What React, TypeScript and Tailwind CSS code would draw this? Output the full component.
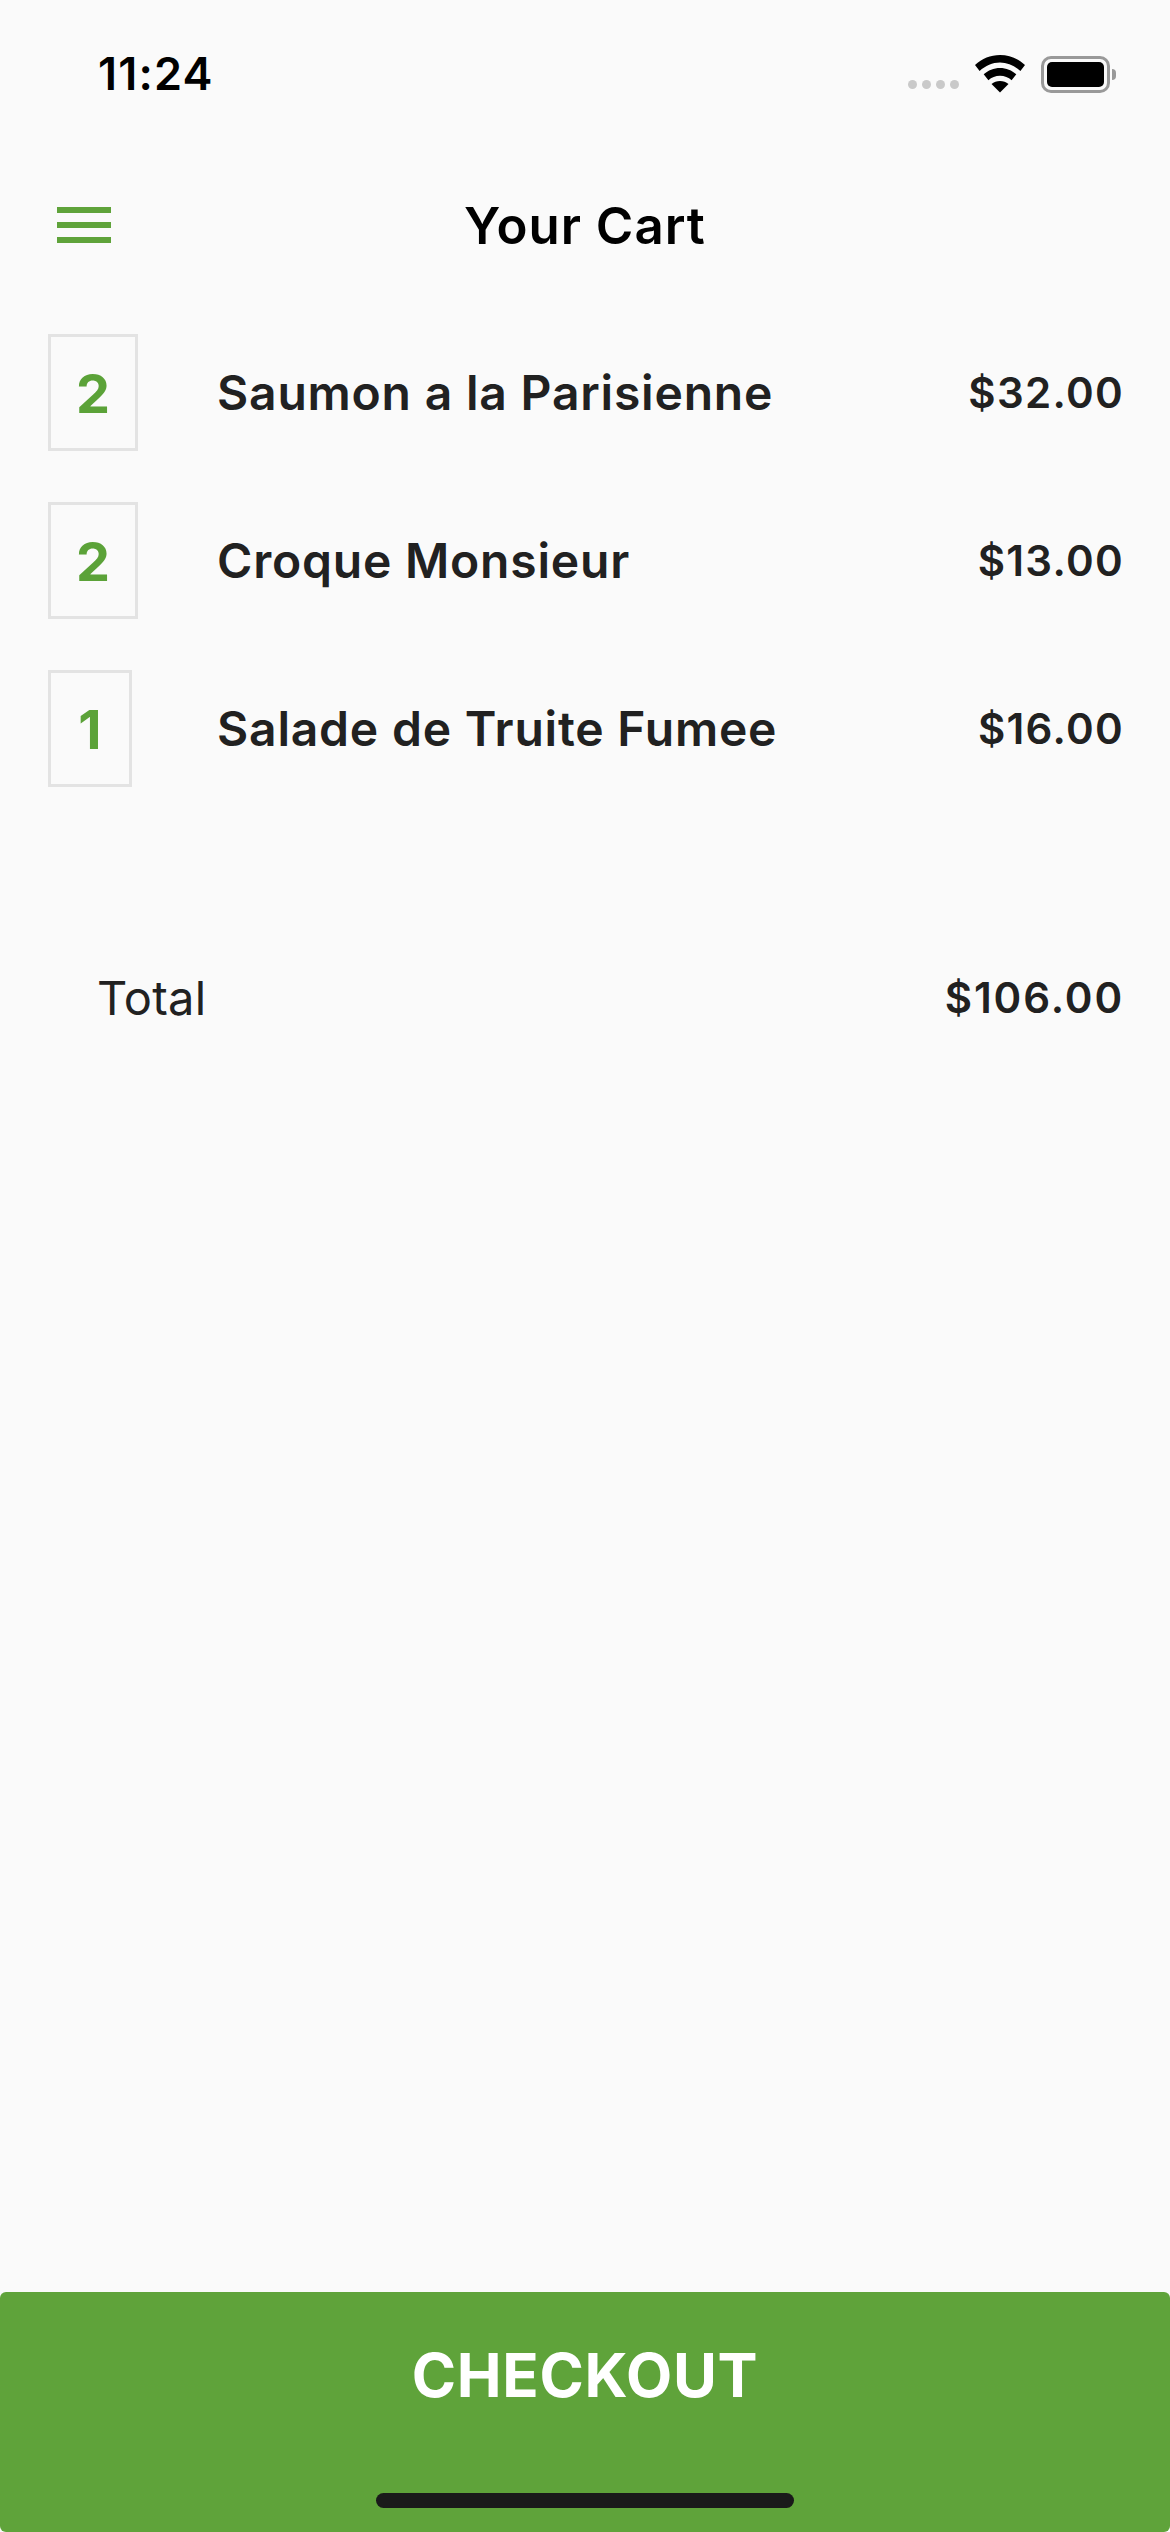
import React from 'react';

const items = [
  { qty: 2, name: 'Saumon a la Parisienne', price: '$32.00', box: 'w-[90px]' },
  { qty: 2, name: 'Croque Monsieur', price: '$13.00', box: 'w-[90px]' },
  { qty: 1, name: 'Salade de Truite Fumee', price: '$16.00', box: 'w-[84px]' },
];

const Wifi = () => (
  <svg width="50" height="38" viewBox="0 0 50 38" fill="#000">
    <path d="M25 0C15.5 0 7 3.6 0 10l4.6 6C10.5 10.600 17.500 7.500 25 7.500S39.500 10.600 45.400 16l4.600-6C43 3.600 34.500 0 25 0Z" />
    <path d="M25 13c-6.200 0-11.900 2.300-16.300 6.300l4.700 5.900C16.500 22.400 20.600 20.700 25 20.700s8.500 1.700 11.600 4.500l4.700-5.900C36.900 15.300 31.200 13 25 13Z" />
    <path d="M25 26c-3.200 0-6.200 1.100-8.500 3.100L25 37.500l8.500-8.400C31.200 27.100 28.200 26 25 26Z" />
  </svg>
);

export default function App() {
  return (
    <div className="flex h-[2532px] w-[1170px] flex-col overflow-hidden bg-[#fafafa] font-['Inter',sans-serif] text-[#212121]">
      <div className="flex h-[148px] shrink-0 items-start justify-between pl-[98px] pr-[54px] pt-[46px]">
        <span className="text-[45px] leading-[56px] font-semibold tracking-[1.2px] text-black">11:24</span>
        <div className="flex items-center pt-[9px]">
          <div className="mt-[20px] mr-[16px] flex gap-[5px]">
            <span className="h-[9px] w-[9px] rounded-full bg-[#c9c9c9]" />
            <span className="h-[9px] w-[9px] rounded-full bg-[#c9c9c9]" />
            <span className="h-[9px] w-[9px] rounded-full bg-[#c9c9c9]" />
            <span className="h-[9px] w-[9px] rounded-full bg-[#c9c9c9]" />
          </div>
          <Wifi />
          <div className="ml-[16px] flex items-center">
            <div className="h-[37px] w-[69px] rounded-[10px] border-[3px] border-[#999] p-[3px]">
              <div className="h-full w-full rounded-[5px] bg-black" />
            </div>
            <div className="ml-[2px] h-[11px] w-[4px] rounded-r-full bg-[#999]" />
          </div>
        </div>
      </div>

      <div className="relative flex h-[154px] shrink-0 items-center justify-center pt-[2px]">
        <div className="absolute left-[57px] top-[59px] flex w-[54px] flex-col gap-[9px]">
          <span className="h-[6px] bg-[#5fa33a]" />
          <span className="h-[6px] bg-[#5fa33a]" />
          <span className="h-[6px] bg-[#5fa33a]" />
        </div>
        <h1 className="text-[51px] leading-[60px] font-semibold tracking-[1px] text-black">Your Cart</h1>
      </div>

      <div className="flex shrink-0 flex-col gap-[51px] pl-[48px] pr-[46px] pt-[32px]">
        {items.map((item) => (
          <div key={item.name} className="flex h-[117px] items-center">
            <div className={`flex h-[117px] items-center justify-center border-[3px] border-[#e3e3e3] pt-[2px] text-[54px] font-bold text-[#5ba238] ${item.box}`}>
              {item.qty}
            </div>
            <span className={`text-[48px] font-semibold tracking-[0.8px] ${item.qty === 1 ? 'ml-[85px]' : 'ml-[79px]'}`}>{item.name}</span>
            <span className="ml-auto text-[42px] font-semibold tracking-[1.3px]">{item.price}</span>
          </div>
        ))}
      </div>

      <div className="flex shrink-0 items-center justify-between pl-[97px] pr-[46px] pt-[181px]">
        <span className="text-[47px] leading-[60px] font-normal tracking-[0.2px]">Total</span>
        <span className="text-[42px] leading-[60px] font-semibold tracking-[1.9px]">$106.00</span>
      </div>

      <div className="flex-1" />

      <div className="flex h-[240px] shrink-0 flex-col items-center rounded-[6px] bg-[#5fa33a]">
        <span className="mt-[45px] text-[60px] leading-[76px] font-bold tracking-[0.7px] text-white">CHECKOUT</span>
        <span className="mt-[80px] h-[15px] w-[418px] rounded-[8px] bg-[#1a1a1a]" />
      </div>
    </div>
  );
}
